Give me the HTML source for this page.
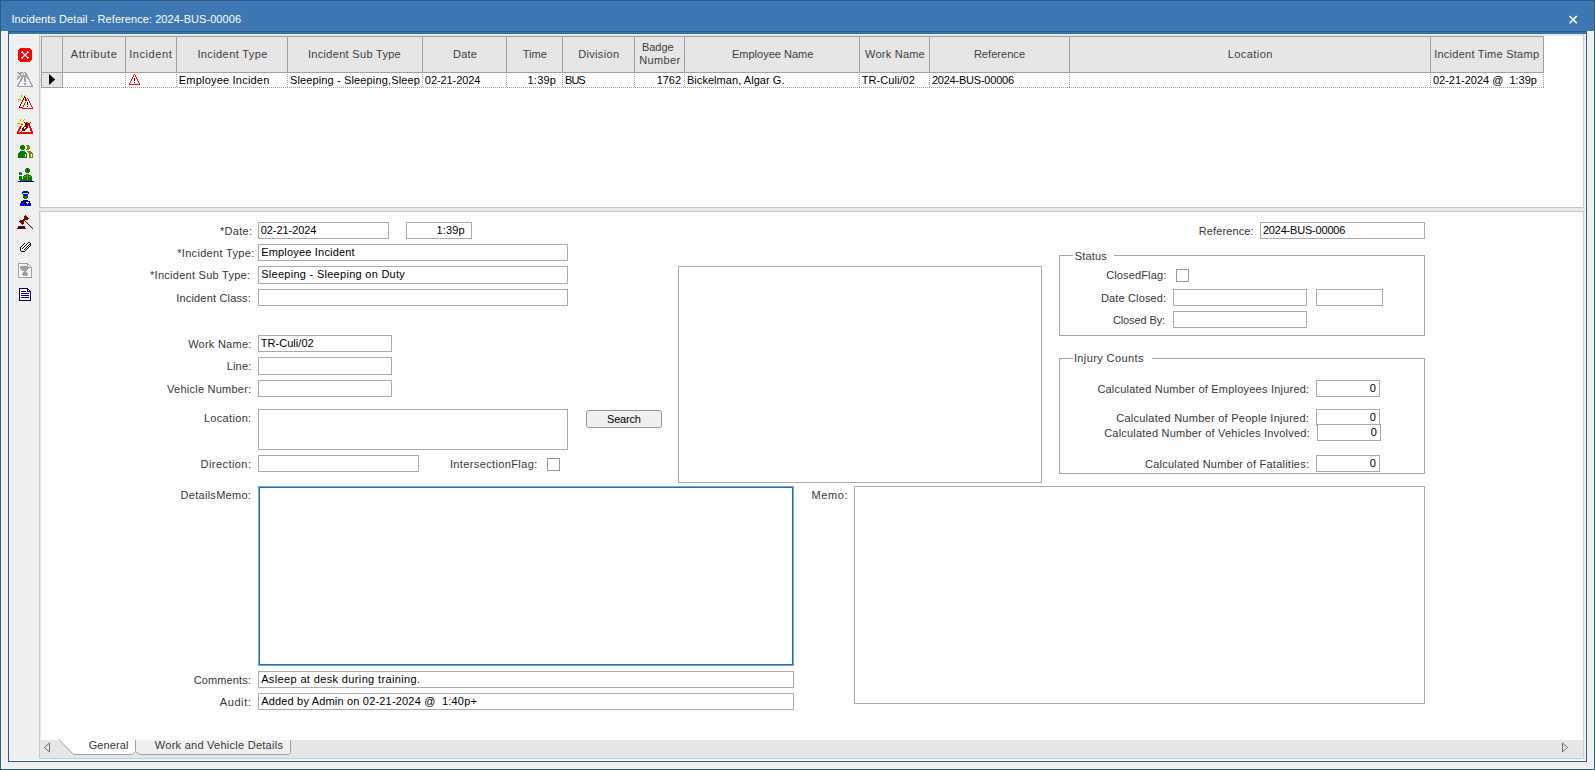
<!DOCTYPE html>
<html lang="en"><head><meta charset="utf-8"><title>Incidents Detail - Reference: 2024-BUS-00006</title>
<style>
html,body{margin:0;padding:0}
body{width:1595px;height:770px;overflow:hidden;position:relative;background:#f0f0f0;font-family:"Liberation Sans",sans-serif;font-size:11px}
div,span,svg{position:absolute;box-sizing:border-box}
.t{white-space:pre;line-height:14px;font-size:11px}
.in{border:1px solid #ababab;background:#fff}
.grp{border:1px solid #a6a6aa}
.cb{border:1px solid #999999;background:#fff}
.vs{width:1px;background:#a0a0a0;top:36px;height:37px}
.vd{width:1px;top:74px;height:14px;background-image:linear-gradient(to bottom,#a0a0a0 50%,rgba(0,0,0,0) 50%);background-size:1px 2px}
svg{overflow:visible}
</style></head><body>

<!-- window frame -->
<div style="left:0;top:0;width:1595px;height:770px;border:1px solid #2b5a8c;background:#f0f0f0"></div>
<div style="left:1px;top:31px;width:1593px;height:738px;border:1px solid #fcfaf7;background:#f0f0f0"></div>
<div style="left:0;top:0;width:1595px;height:31px;background:#3d78b4;border:1px solid #2b5a8c;border-bottom:0;border-top-color:#2b5a8c"></div>
<div style="left:1px;top:1px;width:1593px;height:30px;background:#3d78b4"></div>
<!-- close X -->
<svg style="left:1569px;top:15px" width="9" height="9" viewBox="0 0 9 9"><path d="M0.6 1 L7.8 8.2 M7.8 1 L0.6 8.2" stroke="#fff" stroke-width="1.6" fill="none"/></svg>
<!-- inner frame -->
<div style="left:8px;top:31px;width:1579px;height:731px;border:1px solid #2b5a8c;background:#fdfdfd"></div>
<div style="left:9px;top:32px;width:1577px;height:2px;background:#3573b5"></div>
<!-- toolbar panel -->
<div style="left:9px;top:34px;width:30px;height:727px;background:#f0f0f0;border-top:1px solid #fbf9f6;border-left:1px solid #f6f4f2"></div>
<div style="left:39px;top:34px;width:1px;height:726px;background:#c8c8c8"></div>
<div style="left:40px;top:34px;width:1px;height:726px;background:#e8e8e8"></div>
<!-- top strip above grid -->
<div style="left:39px;top:34px;width:1547px;height:1px;background:#e9e6e2"></div>
<div style="left:40px;top:35px;width:1544px;height:1px;background:#e8e8e8"></div>
<!-- right edge -->
<div style="left:1583px;top:34px;width:1px;height:726px;background:#d0d0d0"></div>
<div style="left:1584px;top:34px;width:1px;height:726px;background:#e8e8e8"></div>
<div style="left:1585px;top:34px;width:1px;height:727px;background:#f8f8f8"></div>
<!-- splitter -->
<div style="left:39px;top:208px;width:1547px;height:3px;background:#e8e8e8"></div>
<div style="left:40px;top:207px;width:1543px;height:1px;background:#c8c8c8"></div>
<div style="left:40px;top:211px;width:1543px;height:1px;background:#c8c8c8"></div>
<!-- tab strip -->
<div style="left:41px;top:740px;width:1542px;height:18px;background:#e6e6e6"></div>
<div style="left:39px;top:758px;width:1546px;height:1px;background:#d0d0d0"></div>
<div style="left:9px;top:759px;width:1577px;height:1px;background:#f0f0f0"></div>
<div style="left:9px;top:760px;width:1577px;height:1px;background:#fbfbfb"></div>
<svg style="left:41px;top:740px" width="1542" height="18" viewBox="0 0 1542 18">
 <polygon points="18.5,0 32.5,14.5 91.5,14.5 94.5,11.5 94.5,0" fill="#fdfdfd"/>
 <polygon points="94.5,0 94.5,11.5 98.5,14.5 247.5,14.5 249.5,12.5 249.5,0" fill="#f0f0f0"/>
 <polyline points="18,-0.5 32.5,14.5 91.5,14.5 94.5,11.5 94.5,0" fill="none" stroke="#a0a0a0" stroke-width="1"/>
 <polyline points="94.5,11.5 98.5,14.5 247.5,14.5 249.5,12.5 249.5,0" fill="none" stroke="#a0a0a0" stroke-width="1"/>
 <polygon points="3.5,7.5 8.5,3 8.5,12" fill="none" stroke="#707070" stroke-width="1"/>
 <polygon points="1526.5,7.5 1521.5,3 1521.5,12" fill="none" stroke="#707070" stroke-width="1"/>
</svg>
<!-- grid header -->
<div style="left:41px;top:36px;width:1503px;height:37px;background:#e6e6e6;border:1px solid #a0a0a0"></div>
<div class="vs" style="left:62px"></div><div class="vs" style="left:125px"></div><div class="vs" style="left:176px"></div><div class="vs" style="left:287px"></div><div class="vs" style="left:422px"></div><div class="vs" style="left:506px"></div><div class="vs" style="left:562px"></div><div class="vs" style="left:634px"></div><div class="vs" style="left:684px"></div><div class="vs" style="left:859px"></div><div class="vs" style="left:929px"></div><div class="vs" style="left:1069px"></div><div class="vs" style="left:1430px"></div>
<!-- grid row -->
<div style="left:41px;top:73px;width:22px;height:15px;background:#e6e6e6;border:1px solid #a0a0a0;border-top:0"></div>
<div style="left:63px;top:73px;width:1480px;height:14px;background:#fff"></div>
<div style="left:63px;top:87px;width:1481px;height:1px;background-image:linear-gradient(to right,#a0a0a0 50%,rgba(0,0,0,0) 50%);background-size:2px 1px"></div>
<div class="vd" style="left:125px"></div><div class="vd" style="left:176px"></div><div class="vd" style="left:287px"></div><div class="vd" style="left:422px"></div><div class="vd" style="left:506px"></div><div class="vd" style="left:562px"></div><div class="vd" style="left:634px"></div><div class="vd" style="left:684px"></div><div class="vd" style="left:859px"></div><div class="vd" style="left:929px"></div><div class="vd" style="left:1069px"></div><div class="vd" style="left:1430px"></div><div class="vd" style="left:1543px"></div>
<svg style="left:49px;top:74px" width="7" height="11" viewBox="0 0 7 11"><polygon points="0,0 6.2,5.5 0,11" fill="#000"/></svg>
<!-- form inputs -->
<div class="in" style="left:258px;top:222px;width:131px;height:17px"></div>
<div class="in" style="left:406px;top:222px;width:66px;height:17px"></div>
<div class="in" style="left:258px;top:244px;width:310px;height:17px"></div>
<div class="in" style="left:258px;top:266px;width:310px;height:18px"></div>
<div class="in" style="left:258px;top:289px;width:310px;height:17px"></div>
<div class="in" style="left:258px;top:335px;width:134px;height:17px"></div>
<div class="in" style="left:258px;top:357px;width:134px;height:18px"></div>
<div class="in" style="left:258px;top:380px;width:134px;height:17px"></div>
<div class="in" style="left:258px;top:409px;width:310px;height:41px"></div>
<div class="in" style="left:258px;top:455px;width:161px;height:17px"></div>
<div class="cb" style="left:547px;top:458px;width:13px;height:13px"></div>
<div style="left:586px;top:410px;width:76px;height:18px;background:#f0f0f0;border:1px solid #969696;border-radius:3px"></div>
<div class="in" style="left:678px;top:266px;width:364px;height:217px"></div>
<div class="in" style="left:1260px;top:222px;width:165px;height:17px"></div>
<!-- status group -->
<div class="grp" style="left:1059px;top:255px;width:366px;height:81px"></div>
<div style="left:1073px;top:255px;width:41px;height:1px;background:#fdfdfd"></div>
<div class="cb" style="left:1176px;top:269px;width:13px;height:13px"></div>
<div class="in" style="left:1173px;top:289px;width:134px;height:17px"></div>
<div class="in" style="left:1316px;top:289px;width:67px;height:17px"></div>
<div class="in" style="left:1173px;top:311px;width:134px;height:17px"></div>
<!-- injury group -->
<div class="grp" style="left:1059px;top:358px;width:366px;height:116px"></div>
<div style="left:1073px;top:358px;width:79px;height:1px;background:#fdfdfd"></div>
<div class="in" style="left:1316px;top:380px;width:64px;height:17px"></div>
<div class="in" style="left:1316px;top:409px;width:64px;height:17px"></div>
<div class="in" style="left:1317px;top:424px;width:64px;height:17px"></div>
<div class="in" style="left:1316px;top:455px;width:64px;height:17px"></div>
<!-- memo boxes -->
<div class="in" style="left:258px;top:486px;width:536px;height:180px;border-color:#a0a0a0"><div style="left:0;top:0;right:0;bottom:0;border:1px solid #0078d7"></div></div>
<div class="in" style="left:258px;top:671px;width:536px;height:17px"></div>
<div class="in" style="left:258px;top:693px;width:536px;height:17px"></div>
<div class="in" style="left:854px;top:486px;width:571px;height:218px"></div>

<svg style="left:17px;top:47px" width="16" height="16" viewBox="0 0 16 16" shape-rendering="crispEdges"><path fill="#eaffff" d="M3 0h10v1h-10zM0 3h1v1h-1zM15 3h1v1h-1zM0 4h1v1h-1zM15 4h1v1h-1zM0 5h1v1h-1zM15 5h1v1h-1zM0 6h1v1h-1zM15 6h1v1h-1zM0 7h1v1h-1zM15 7h1v1h-1zM0 8h1v1h-1zM15 8h1v1h-1zM0 9h1v1h-1zM15 9h1v1h-1zM0 10h1v1h-1zM15 10h1v1h-1zM0 11h1v1h-1zM15 11h1v1h-1zM0 12h1v1h-1zM15 12h1v1h-1zM3 15h10v1h-10z"/><path fill="#cfe4e4" d="M2 1h1v1h-1zM13 1h1v1h-1zM1 2h1v1h-1zM14 2h1v1h-1zM1 13h1v1h-1zM14 13h1v1h-1zM2 14h1v1h-1zM13 14h1v1h-1z"/><path fill="#ff0000" d="M3 1h10v1h-10zM2 2h12v1h-12zM1 3h14v1h-14zM1 4h4v1h-4zM6 4h4v1h-4zM11 4h4v1h-4zM1 5h3v1h-3zM7 5h2v1h-2zM12 5h3v1h-3zM1 6h4v1h-4zM11 6h4v1h-4zM1 7h5v1h-5zM10 7h5v1h-5zM1 8h5v1h-5zM10 8h5v1h-5zM1 9h4v1h-4zM11 9h4v1h-4zM1 10h3v1h-3zM7 10h2v1h-2zM12 10h3v1h-3zM1 11h4v1h-4zM6 11h4v1h-4zM11 11h4v1h-4zM1 12h14v1h-14zM2 13h12v1h-12zM3 14h10v1h-10z"/><path fill="#ffffff" d="M5 4h1v1h-1zM10 4h1v1h-1zM4 5h2v1h-2zM10 5h2v1h-2zM6 6h1v1h-1zM9 6h1v1h-1zM7 7h2v1h-2zM7 8h2v1h-2zM6 9h1v1h-1zM9 9h1v1h-1zM4 10h2v1h-2zM10 10h2v1h-2zM5 11h1v1h-1zM10 11h1v1h-1z"/><path fill="#ff5050" d="M6 5h1v1h-1zM9 5h1v1h-1zM5 6h1v1h-1zM10 6h1v1h-1zM5 9h1v1h-1zM10 9h1v1h-1zM6 10h1v1h-1zM9 10h1v1h-1z"/><path fill="#e07070" d="M7 6h2v1h-2zM6 7h1v1h-1zM9 7h1v1h-1zM6 8h1v1h-1zM9 8h1v1h-1zM7 9h2v1h-2z"/></svg>
<svg style="left:17px;top:72px" width="16" height="15" viewBox="0 0 16 15" shape-rendering="crispEdges"><path fill="#a0a0a0" d="M0 0h2v1h-2zM3 0h3v1h-3zM7 0h2v1h-2zM1 1h4v1h-4zM6 1h1v1h-1zM8 1h2v1h-2zM2 2h2v1h-2zM6 2h1v1h-1zM8 2h2v1h-2zM3 3h8v1h-8zM0 4h3v1h-3zM4 4h7v1h-7zM1 5h2v1h-2zM4 5h2v1h-2zM7 5h2v1h-2zM10 5h2v1h-2zM0 6h2v1h-2zM4 6h2v1h-2zM7 6h2v1h-2zM10 6h2v1h-2zM0 7h1v1h-1zM3 7h2v1h-2zM7 7h2v1h-2zM11 7h2v1h-2zM3 8h2v1h-2zM7 8h2v1h-2zM12 8h1v1h-1zM2 9h2v1h-2zM7 9h2v1h-2zM12 9h2v1h-2zM2 10h1v1h-1zM13 10h1v1h-1zM1 11h2v1h-2zM7 11h2v1h-2zM13 11h2v1h-2zM1 12h1v1h-1zM7 12h2v1h-2zM14 12h1v1h-1zM0 13h2v1h-2zM14 13h2v1h-2zM0 14h16v1h-16z"/><path fill="#f8f8f8" d="M7 1h1v1h-1zM7 2h1v1h-1zM6 5h1v1h-1zM9 5h1v1h-1zM6 6h1v1h-1zM9 6h1v1h-1zM5 7h2v1h-2zM9 7h2v1h-2zM5 8h2v1h-2zM9 8h3v1h-3zM4 9h3v1h-3zM9 9h3v1h-3zM3 10h10v1h-10zM3 11h4v1h-4zM9 11h4v1h-4zM2 12h5v1h-5zM9 12h5v1h-5zM2 13h12v1h-12z"/></svg>
<svg style="left:18px;top:95px" width="15" height="14" viewBox="0 0 15 14" shape-rendering="crispEdges"><path fill="#ffff00" d="M0 0h1v1h-1zM4 0h1v1h-1zM1 1h1v1h-1zM7 1h1v1h-1zM2 2h1v1h-1zM4 2h1v1h-1zM1 3h1v1h-1zM3 3h1v1h-1zM4 4h1v1h-1zM1 5h1v1h-1zM5 5h1v1h-1zM7 6h1v1h-1z"/><path fill="#a0a0a0" d="M3 0h1v1h-1zM7 0h1v1h-1zM3 1h1v1h-1zM0 4h3v1h-3zM0 6h1v1h-1z"/><path fill="#800000" d="M6 1h1v1h-1zM6 2h2v1h-2zM5 3h1v1h-1zM7 3h1v1h-1zM5 4h1v1h-1zM7 4h1v1h-1zM4 5h1v1h-1zM4 6h1v1h-1zM3 7h1v1h-1zM3 8h1v1h-1zM2 9h1v1h-1zM2 10h1v1h-1zM1 11h1v1h-1zM1 12h3v1h-3z"/><path fill="#ff0000" d="M9 3h1v1h-1zM8 4h1v1h-1zM10 4h1v1h-1zM8 5h1v1h-1zM10 5h1v1h-1zM11 6h1v1h-1zM7 7h1v1h-1zM11 7h1v1h-1zM6 8h1v1h-1zM12 8h1v1h-1zM6 9h1v1h-1zM12 9h1v1h-1zM5 10h1v1h-1zM13 10h1v1h-1zM5 11h1v1h-1zM13 11h1v1h-1zM4 12h1v1h-1zM14 12h1v1h-1zM4 13h11v1h-11z"/><path fill="#ffffff" d="M9 4h1v1h-1zM9 5h1v1h-1zM8 6h3v1h-3zM8 7h1v1h-1zM10 7h1v1h-1zM7 8h2v1h-2zM10 8h2v1h-2zM7 9h2v1h-2zM10 9h2v1h-2zM6 10h7v1h-7zM6 11h3v1h-3zM10 11h3v1h-3zM5 12h9v1h-9z"/><path fill="#000000" d="M7 5h1v1h-1zM9 7h1v1h-1zM9 8h1v1h-1zM9 9h1v1h-1zM9 11h1v1h-1z"/></svg>
<svg style="left:17px;top:119px" width="16" height="15" viewBox="0 0 16 15" shape-rendering="crispEdges"><path fill="#ffff00" d="M0 0h1v1h-1zM4 0h1v1h-1zM1 1h1v1h-1zM7 1h1v1h-1zM2 2h1v1h-1zM4 2h1v1h-1zM6 2h1v1h-1zM1 3h1v1h-1zM3 3h1v1h-1zM8 3h1v1h-1zM4 4h2v1h-2zM1 5h1v1h-1zM4 6h2v1h-2zM7 6h1v1h-1z"/><path fill="#a0a0a0" d="M3 0h1v1h-1zM7 0h1v1h-1zM3 1h1v1h-1zM6 1h1v1h-1zM0 4h3v1h-3zM0 6h1v1h-1z"/><path fill="#000000" d="M7 3h1v1h-1zM8 4h2v1h-2zM8 5h2v1h-2z"/><path fill="#ff0000" d="M9 3h2v1h-2zM10 4h2v1h-2zM4 5h2v1h-2zM12 5h1v1h-1zM11 6h2v1h-2zM3 7h2v1h-2zM12 7h2v1h-2zM2 8h2v1h-2zM12 8h2v1h-2zM2 9h2v1h-2zM13 9h2v1h-2zM1 10h2v1h-2zM13 10h2v1h-2zM1 11h2v1h-2zM13 11h2v1h-2zM0 12h2v1h-2zM14 12h2v1h-2zM0 13h3v1h-3zM4 13h12v1h-12zM0 14h2v1h-2zM3 14h13v1h-13z"/><path fill="#800000" d="M13 3h1v1h-1zM12 4h1v1h-1zM10 5h2v1h-2zM8 6h3v1h-3zM7 7h4v1h-4zM6 8h1v1h-1zM9 8h2v1h-2zM5 9h2v1h-2zM8 9h2v1h-2zM5 10h4v1h-4zM5 11h3v1h-3zM4 12h1v1h-1zM3 13h1v1h-1zM2 14h1v1h-1z"/><path fill="#ffffff" d="M7 4h1v1h-1zM6 5h2v1h-2zM6 6h1v1h-1zM5 7h2v1h-2zM11 7h1v1h-1zM4 8h2v1h-2zM7 8h2v1h-2zM11 8h1v1h-1zM4 9h1v1h-1zM7 9h1v1h-1zM10 9h3v1h-3zM3 10h2v1h-2zM9 10h4v1h-4zM3 11h2v1h-2zM8 11h5v1h-5zM2 12h2v1h-2zM5 12h9v1h-9z"/></svg>
<svg style="left:18px;top:145px" width="15" height="13" viewBox="0 0 15 13" shape-rendering="crispEdges"><path fill="#008000" d="M3 0h3v1h-3zM2 1h5v1h-5zM2 2h5v1h-5zM2 3h5v1h-5zM3 4h3v1h-3zM2 6h5v1h-5zM1 7h7v1h-7zM0 8h9v1h-9zM0 9h7v1h-7zM8 9h1v1h-1zM0 10h7v1h-7zM8 10h1v1h-1zM0 11h7v1h-7zM8 11h1v1h-1zM0 12h9v1h-9z"/><path fill="#808000" d="M8 0h3v1h-3zM9 1h3v1h-3zM9 2h3v1h-3zM9 3h3v1h-3zM8 4h3v1h-3zM9 6h4v1h-4zM10 7h4v1h-4zM11 8h4v1h-4zM11 9h2v1h-2zM14 9h1v1h-1zM11 10h2v1h-2zM14 10h1v1h-1zM11 11h2v1h-2zM14 11h1v1h-1zM11 12h4v1h-4z"/><path fill="#ffffff" d="M7 9h1v1h-1zM13 9h1v1h-1zM7 10h1v1h-1zM13 10h1v1h-1zM7 11h1v1h-1zM13 11h1v1h-1z"/></svg>
<svg style="left:18px;top:168px" width="16" height="14" viewBox="0 0 16 14" shape-rendering="crispEdges"><path fill="#008000" d="M8 0h3v1h-3zM7 1h5v1h-5zM7 2h5v1h-5zM7 3h5v1h-5zM1 4h2v1h-2zM8 4h3v1h-3zM1 5h3v1h-3zM1 6h3v1h-3zM9 6h1v1h-1zM6 7h3v1h-3zM10 7h3v1h-3zM1 8h3v1h-3zM5 8h1v1h-1zM8 8h1v1h-1zM10 8h1v1h-1zM13 8h1v1h-1zM1 9h3v1h-3zM5 9h4v1h-4zM10 9h4v1h-4zM1 10h3v1h-3zM5 10h4v1h-4zM10 10h4v1h-4zM1 11h8v1h-8zM10 11h4v1h-4zM2 12h12v1h-12z"/><path fill="#c08000" d="M8 6h1v1h-1zM10 6h1v1h-1zM9 7h1v1h-1zM6 8h2v1h-2zM9 8h1v1h-1zM11 8h2v1h-2zM9 9h1v1h-1zM9 10h1v1h-1zM9 11h1v1h-1z"/><path fill="#000080" d="M0 13h16v1h-16z"/></svg>
<svg style="left:20px;top:191px" width="11" height="15" viewBox="0 0 11 15" shape-rendering="crispEdges"><path fill="#0000ff" d="M3 0h5v1h-5zM2 1h7v1h-7zM2 2h1v1h-1zM8 2h1v1h-1zM3 3h5v1h-5zM4 4h3v1h-3zM5 9h1v1h-1zM3 10h2v1h-2zM6 10h2v1h-2zM1 11h4v1h-4zM9 11h1v1h-1zM0 12h5v1h-5zM6 12h1v1h-1zM8 12h3v1h-3zM0 13h5v1h-5zM6 13h5v1h-5zM0 14h5v1h-5zM6 14h5v1h-5z"/><path fill="#ffffff" d="M3 2h1v1h-1zM7 2h1v1h-1z"/><path fill="#ffff00" d="M4 2h3v1h-3zM6 11h3v1h-3zM7 12h1v1h-1z"/><path fill="#008000" d="M3 4h1v1h-1zM7 4h1v1h-1zM3 5h5v1h-5zM3 6h5v1h-5zM4 7h3v1h-3z"/><path fill="#000000" d="M3 9h2v1h-2zM6 9h2v1h-2zM1 10h2v1h-2zM5 10h1v1h-1zM8 10h2v1h-2zM5 11h1v1h-1zM5 12h1v1h-1zM5 13h1v1h-1zM5 14h1v1h-1z"/></svg>
<svg style="left:17px;top:215px" width="16" height="14" viewBox="0 0 16 14" shape-rendering="crispEdges"><path fill="#800000" d="M8 0h1v1h-1zM7 1h3v1h-3zM7 2h4v1h-4zM7 3h5v1h-5zM6 4h5v1h-5zM3 5h5v1h-5zM2 6h5v1h-5zM8 6h1v1h-1zM3 7h4v1h-4zM9 7h1v1h-1zM4 8h3v1h-3zM10 8h1v1h-1zM5 9h1v1h-1zM11 9h1v1h-1zM12 10h1v1h-1zM1 11h7v1h-7zM13 11h1v1h-1zM14 12h1v1h-1zM0 13h9v1h-9zM15 13h1v1h-1z"/><path fill="#c4d4d4" d="M9 6h1v1h-1zM10 7h1v1h-1zM11 8h1v1h-1zM12 9h1v1h-1zM13 10h1v1h-1zM14 11h1v1h-1zM15 12h1v1h-1z"/><path fill="#000080" d="M1 12h7v1h-7z"/></svg>
<svg style="left:20px;top:242px" width="11" height="10" viewBox="0 0 11 10" shape-rendering="crispEdges"><path fill="#000000" d="M8 0h2v1h-2zM4 1h1v1h-1zM7 1h1v1h-1zM10 1h1v1h-1zM3 2h1v1h-1zM6 2h1v1h-1zM9 2h2v1h-2zM2 3h1v1h-1zM5 3h1v1h-1zM8 3h1v1h-1zM10 3h1v1h-1zM1 4h1v1h-1zM4 4h1v1h-1zM7 4h1v1h-1zM9 4h1v1h-1zM0 5h1v1h-1zM3 5h1v1h-1zM6 5h1v1h-1zM8 5h1v1h-1zM0 6h1v1h-1zM2 6h1v1h-1zM5 6h1v1h-1zM7 6h1v1h-1zM0 7h1v1h-1zM4 7h1v1h-1zM6 7h1v1h-1zM0 8h1v1h-1zM5 8h1v1h-1zM1 9h4v1h-4z"/><path fill="#fafafa" d="M8 1h2v1h-2zM7 2h2v1h-2zM3 3h1v1h-1zM6 3h2v1h-2zM9 3h1v1h-1zM2 4h2v1h-2zM5 4h2v1h-2zM8 4h1v1h-1zM1 5h2v1h-2zM4 5h2v1h-2zM7 5h1v1h-1zM1 6h1v1h-1zM3 6h2v1h-2zM6 6h1v1h-1zM1 7h3v1h-3zM5 7h1v1h-1zM1 8h4v1h-4z"/></svg>
<svg style="left:18px;top:263px" width="14" height="15" viewBox="0 0 14 15" shape-rendering="crispEdges"><path fill="#a0a0a0" d="M0 0h10v1h-10zM0 1h1v1h-1zM9 1h2v1h-2zM0 2h1v1h-1zM9 2h1v1h-1zM11 2h1v1h-1zM0 3h1v1h-1zM2 3h8v1h-8zM12 3h1v1h-1zM0 4h1v1h-1zM2 4h12v1h-12zM0 5h1v1h-1zM2 5h9v1h-9zM13 5h1v1h-1zM0 6h1v1h-1zM3 6h7v1h-7zM13 6h1v1h-1zM0 7h1v1h-1zM4 7h5v1h-5zM13 7h1v1h-1zM0 8h1v1h-1zM6 8h2v1h-2zM13 8h1v1h-1zM0 9h1v1h-1zM5 9h4v1h-4zM13 9h1v1h-1zM0 10h1v1h-1zM4 10h6v1h-6zM13 10h1v1h-1zM0 11h1v1h-1zM4 11h6v1h-6zM13 11h1v1h-1zM0 12h1v1h-1zM5 12h4v1h-4zM13 12h1v1h-1zM0 13h1v1h-1zM13 13h1v1h-1zM0 14h14v1h-14z"/><path fill="#f0f0f0" d="M10 0h3v1h-3zM11 1h2v1h-2zM12 2h1v1h-1z"/><path fill="#f8f8f8" d="M1 1h8v1h-8zM1 2h8v1h-8zM10 2h1v1h-1zM1 3h1v1h-1zM10 3h2v1h-2zM1 4h1v1h-1zM1 5h1v1h-1zM11 5h2v1h-2zM1 6h2v1h-2zM10 6h3v1h-3zM1 7h3v1h-3zM9 7h4v1h-4zM1 8h5v1h-5zM8 8h5v1h-5zM1 9h4v1h-4zM9 9h4v1h-4zM1 10h3v1h-3zM10 10h3v1h-3zM1 11h3v1h-3zM10 11h3v1h-3zM1 12h4v1h-4zM9 12h4v1h-4zM1 13h12v1h-12z"/></svg>
<svg style="left:19px;top:288px" width="12" height="13" viewBox="0 0 12 13" shape-rendering="crispEdges"><path fill="#000080" d="M0 0h9v1h-9zM0 1h1v1h-1zM8 1h2v1h-2zM0 2h1v1h-1zM8 2h1v1h-1zM10 2h1v1h-1zM0 3h1v1h-1zM2 3h5v1h-5zM8 3h4v1h-4zM0 4h1v1h-1zM11 4h1v1h-1zM0 5h1v1h-1zM2 5h8v1h-8zM11 5h1v1h-1zM0 6h1v1h-1zM11 6h1v1h-1zM0 7h1v1h-1zM2 7h8v1h-8zM11 7h1v1h-1zM0 8h1v1h-1zM11 8h1v1h-1zM0 9h1v1h-1zM2 9h8v1h-8zM11 9h1v1h-1zM0 10h1v1h-1zM11 10h1v1h-1zM0 11h1v1h-1zM11 11h1v1h-1zM0 12h12v1h-12z"/><path fill="#f0f0f0" d="M9 0h2v1h-2zM10 1h1v1h-1z"/><path fill="#ffffff" d="M1 1h7v1h-7zM1 2h7v1h-7zM9 2h1v1h-1zM1 3h1v1h-1zM7 3h1v1h-1zM1 4h10v1h-10zM1 5h1v1h-1zM10 5h1v1h-1zM1 6h10v1h-10zM1 7h1v1h-1zM10 7h1v1h-1zM1 8h10v1h-10zM1 9h1v1h-1zM10 9h1v1h-1zM1 10h10v1h-10zM1 11h10v1h-10z"/></svg>
<svg style="left:129px;top:74px" width="11" height="11" viewBox="0 0 11 11" shape-rendering="crispEdges"><path fill="#ff0000" d="M5 0h1v1h-1zM4 1h1v1h-1zM6 1h1v1h-1zM4 2h1v1h-1zM6 2h1v1h-1zM3 3h1v1h-1zM7 3h1v1h-1zM3 4h1v1h-1zM7 4h1v1h-1zM2 5h1v1h-1zM8 5h1v1h-1zM2 6h1v1h-1zM8 6h1v1h-1zM1 7h1v1h-1zM9 7h1v1h-1zM1 8h1v1h-1zM9 8h1v1h-1zM0 9h1v1h-1zM10 9h1v1h-1zM0 10h11v1h-11z"/><path fill="#ffffff" d="M5 1h1v1h-1zM5 2h1v1h-1zM4 3h3v1h-3zM4 4h1v1h-1zM6 4h1v1h-1zM3 5h2v1h-2zM6 5h2v1h-2zM3 6h2v1h-2zM6 6h2v1h-2zM2 7h7v1h-7zM2 8h3v1h-3zM6 8h3v1h-3zM1 9h9v1h-9z"/><path fill="#000000" d="M5 4h1v1h-1zM5 5h1v1h-1zM5 6h1v1h-1zM5 8h1v1h-1z"/></svg>
<span class="t" style="left:11.38px;top:12px;color:#ffffff;letter-spacing:0.065px;">Incidents Detail - Reference: 2024-BUS-00006</span>
<span class="t" style="left:70.64px;top:47px;color:#404040;letter-spacing:0.669px;">Attribute</span>
<span class="t" style="left:129.18px;top:47px;color:#404040;letter-spacing:0.573px;">Incident</span>
<span class="t" style="left:197.38px;top:47px;color:#404040;letter-spacing:0.400px;">Incident Type</span>
<span class="t" style="left:307.98px;top:47px;color:#404040;letter-spacing:0.307px;">Incident Sub Type</span>
<span class="t" style="left:452.98px;top:47px;color:#404040;letter-spacing:0.233px;">Date</span>
<span class="t" style="left:522.65px;top:47px;color:#404040;letter-spacing:0.076px;">Time</span>
<span class="t" style="left:578.18px;top:47px;color:#404040;letter-spacing:0.336px;">Division</span>
<span class="t" style="left:641.98px;top:40px;color:#404040;letter-spacing:-0.049px;">Badge</span>
<span class="t" style="left:639.28px;top:53px;color:#404040;letter-spacing:0.355px;">Number</span>
<span class="t" style="left:731.88px;top:47px;color:#404040;letter-spacing:0.017px;">Employee Name</span>
<span class="t" style="left:865.04px;top:47px;color:#404040;letter-spacing:0.231px;">Work Name</span>
<span class="t" style="left:973.88px;top:47px;color:#404040;letter-spacing:0.050px;">Reference</span>
<span class="t" style="left:1227.68px;top:47px;color:#404040;letter-spacing:0.451px;">Location</span>
<span class="t" style="left:1434.18px;top:47px;color:#404040;letter-spacing:0.253px;">Incident Time Stamp</span>
<span class="t" style="left:178.78px;top:73px;color:#000000;letter-spacing:0.206px;">Employee Inciden</span>
<span class="t" style="left:289.93px;top:73px;color:#000000;letter-spacing:0.139px;">Sleeping - Sleeping,Sleep</span>
<span class="t" style="left:424.83px;top:73px;color:#000000;letter-spacing:-0.069px;">02-21-2024</span>
<span class="t" style="left:527.56px;top:73px;color:#000000;letter-spacing:0.204px;">1:39p</span>
<span class="t" style="left:565.08px;top:73px;color:#000000;letter-spacing:-1.000px;">BUS</span>
<span class="t" style="left:656.66px;top:73px;color:#000000;letter-spacing:-0.029px;">1762</span>
<span class="t" style="left:686.98px;top:73px;color:#000000;letter-spacing:0.051px;">Bickelman, Algar G.</span>
<span class="t" style="left:861.65px;top:73px;color:#000000;letter-spacing:0.074px;">TR-Culi/02</span>
<span class="t" style="left:931.90px;top:73px;color:#000000;letter-spacing:-0.216px;">2024-BUS-00006</span>
<span class="t" style="left:1432.93px;top:73px;color:#000000;letter-spacing:-0.008px;">02-21-2024 @  1:39p</span>
<span class="t" style="left:220.05px;top:224px;color:#383838;letter-spacing:0.290px;">*Date:</span>
<span class="t" style="left:177.15px;top:246px;color:#383838;letter-spacing:0.325px;">*Incident Type:</span>
<span class="t" style="left:150.05px;top:268px;color:#383838;letter-spacing:0.264px;">*Incident Sub Type:</span>
<span class="t" style="left:176.28px;top:291px;color:#383838;letter-spacing:0.174px;">Incident Class:</span>
<span class="t" style="left:188.14px;top:337px;color:#383838;letter-spacing:0.255px;">Work Name:</span>
<span class="t" style="left:226.68px;top:359px;color:#383838;letter-spacing:0.186px;">Line:</span>
<span class="t" style="left:167.12px;top:382px;color:#383838;letter-spacing:0.236px;">Vehicle Number:</span>
<span class="t" style="left:203.88px;top:411px;color:#383838;letter-spacing:0.327px;">Location:</span>
<span class="t" style="left:200.58px;top:457px;color:#383838;letter-spacing:0.435px;">Direction:</span>
<span class="t" style="left:449.88px;top:457px;color:#383838;letter-spacing:0.377px;">IntersectionFlag:</span>
<span class="t" style="left:180.58px;top:488px;color:#383838;letter-spacing:0.275px;">DetailsMemo:</span>
<span class="t" style="left:193.68px;top:673px;color:#383838;letter-spacing:0.115px;">Comments:</span>
<span class="t" style="left:219.84px;top:695px;color:#383838;letter-spacing:0.574px;">Audit:</span>
<span class="t" style="left:811.58px;top:488px;color:#383838;letter-spacing:0.579px;">Memo:</span>
<span class="t" style="left:1198.78px;top:224px;color:#383838;letter-spacing:0.116px;">Reference:</span>
<span class="t" style="left:1074.63px;top:249px;color:#383838;letter-spacing:0.204px;">Status</span>
<span class="t" style="left:1106.18px;top:268px;color:#383838;letter-spacing:0.135px;">ClosedFlag:</span>
<span class="t" style="left:1100.98px;top:291px;color:#383838;letter-spacing:0.147px;">Date Closed:</span>
<span class="t" style="left:1112.88px;top:313px;color:#383838;letter-spacing:-0.109px;">Closed By:</span>
<span class="t" style="left:1073.88px;top:351px;color:#383838;letter-spacing:0.394px;">Injury Counts</span>
<span class="t" style="left:1097.38px;top:382px;color:#383838;letter-spacing:0.214px;">Calculated Number of Employees Injured:</span>
<span class="t" style="left:1116.18px;top:411px;color:#383838;letter-spacing:0.266px;">Calculated Number of People Injured:</span>
<span class="t" style="left:1104.18px;top:426px;color:#383838;letter-spacing:0.211px;">Calculated Number of Vehicles Involved:</span>
<span class="t" style="left:1144.98px;top:457px;color:#383838;letter-spacing:0.243px;">Calculated Number of Fatalities:</span>
<span class="t" style="left:260.73px;top:223px;color:#000000;letter-spacing:-0.058px;">02-21-2024</span>
<span class="t" style="left:436.56px;top:223px;color:#000000;letter-spacing:0.154px;">1:39p</span>
<span class="t" style="left:261.18px;top:245px;color:#000000;letter-spacing:0.188px;">Employee Incident</span>
<span class="t" style="left:261.23px;top:267px;color:#000000;letter-spacing:0.279px;">Sleeping - Sleeping on Duty</span>
<span class="t" style="left:260.75px;top:336px;color:#000000;letter-spacing:0.040px;">TR-Culi/02</span>
<span class="t" style="left:1262.90px;top:223px;color:#000000;letter-spacing:-0.193px;">2024-BUS-00006</span>
<span class="t" style="left:1369.73px;top:381px;color:#000000;">0</span>
<span class="t" style="left:1369.73px;top:410px;color:#000000;">0</span>
<span class="t" style="left:1370.73px;top:425px;color:#000000;">0</span>
<span class="t" style="left:1369.73px;top:456px;color:#000000;">0</span>
<span class="t" style="left:261.14px;top:672px;color:#000000;letter-spacing:0.366px;">Asleep at desk during training.</span>
<span class="t" style="left:261.14px;top:694px;color:#000000;letter-spacing:0.182px;">Added by Admin on 02-21-2024 @  1:40p+</span>
<span class="t" style="left:607.03px;top:412px;color:#000000;letter-spacing:-0.214px;">Search</span>
<span class="t" style="left:88.70px;top:738px;color:#383838;letter-spacing:0.091px;">General</span>
<span class="t" style="left:154.84px;top:738px;color:#383838;letter-spacing:0.260px;">Work and Vehicle Details</span>
</body></html>
